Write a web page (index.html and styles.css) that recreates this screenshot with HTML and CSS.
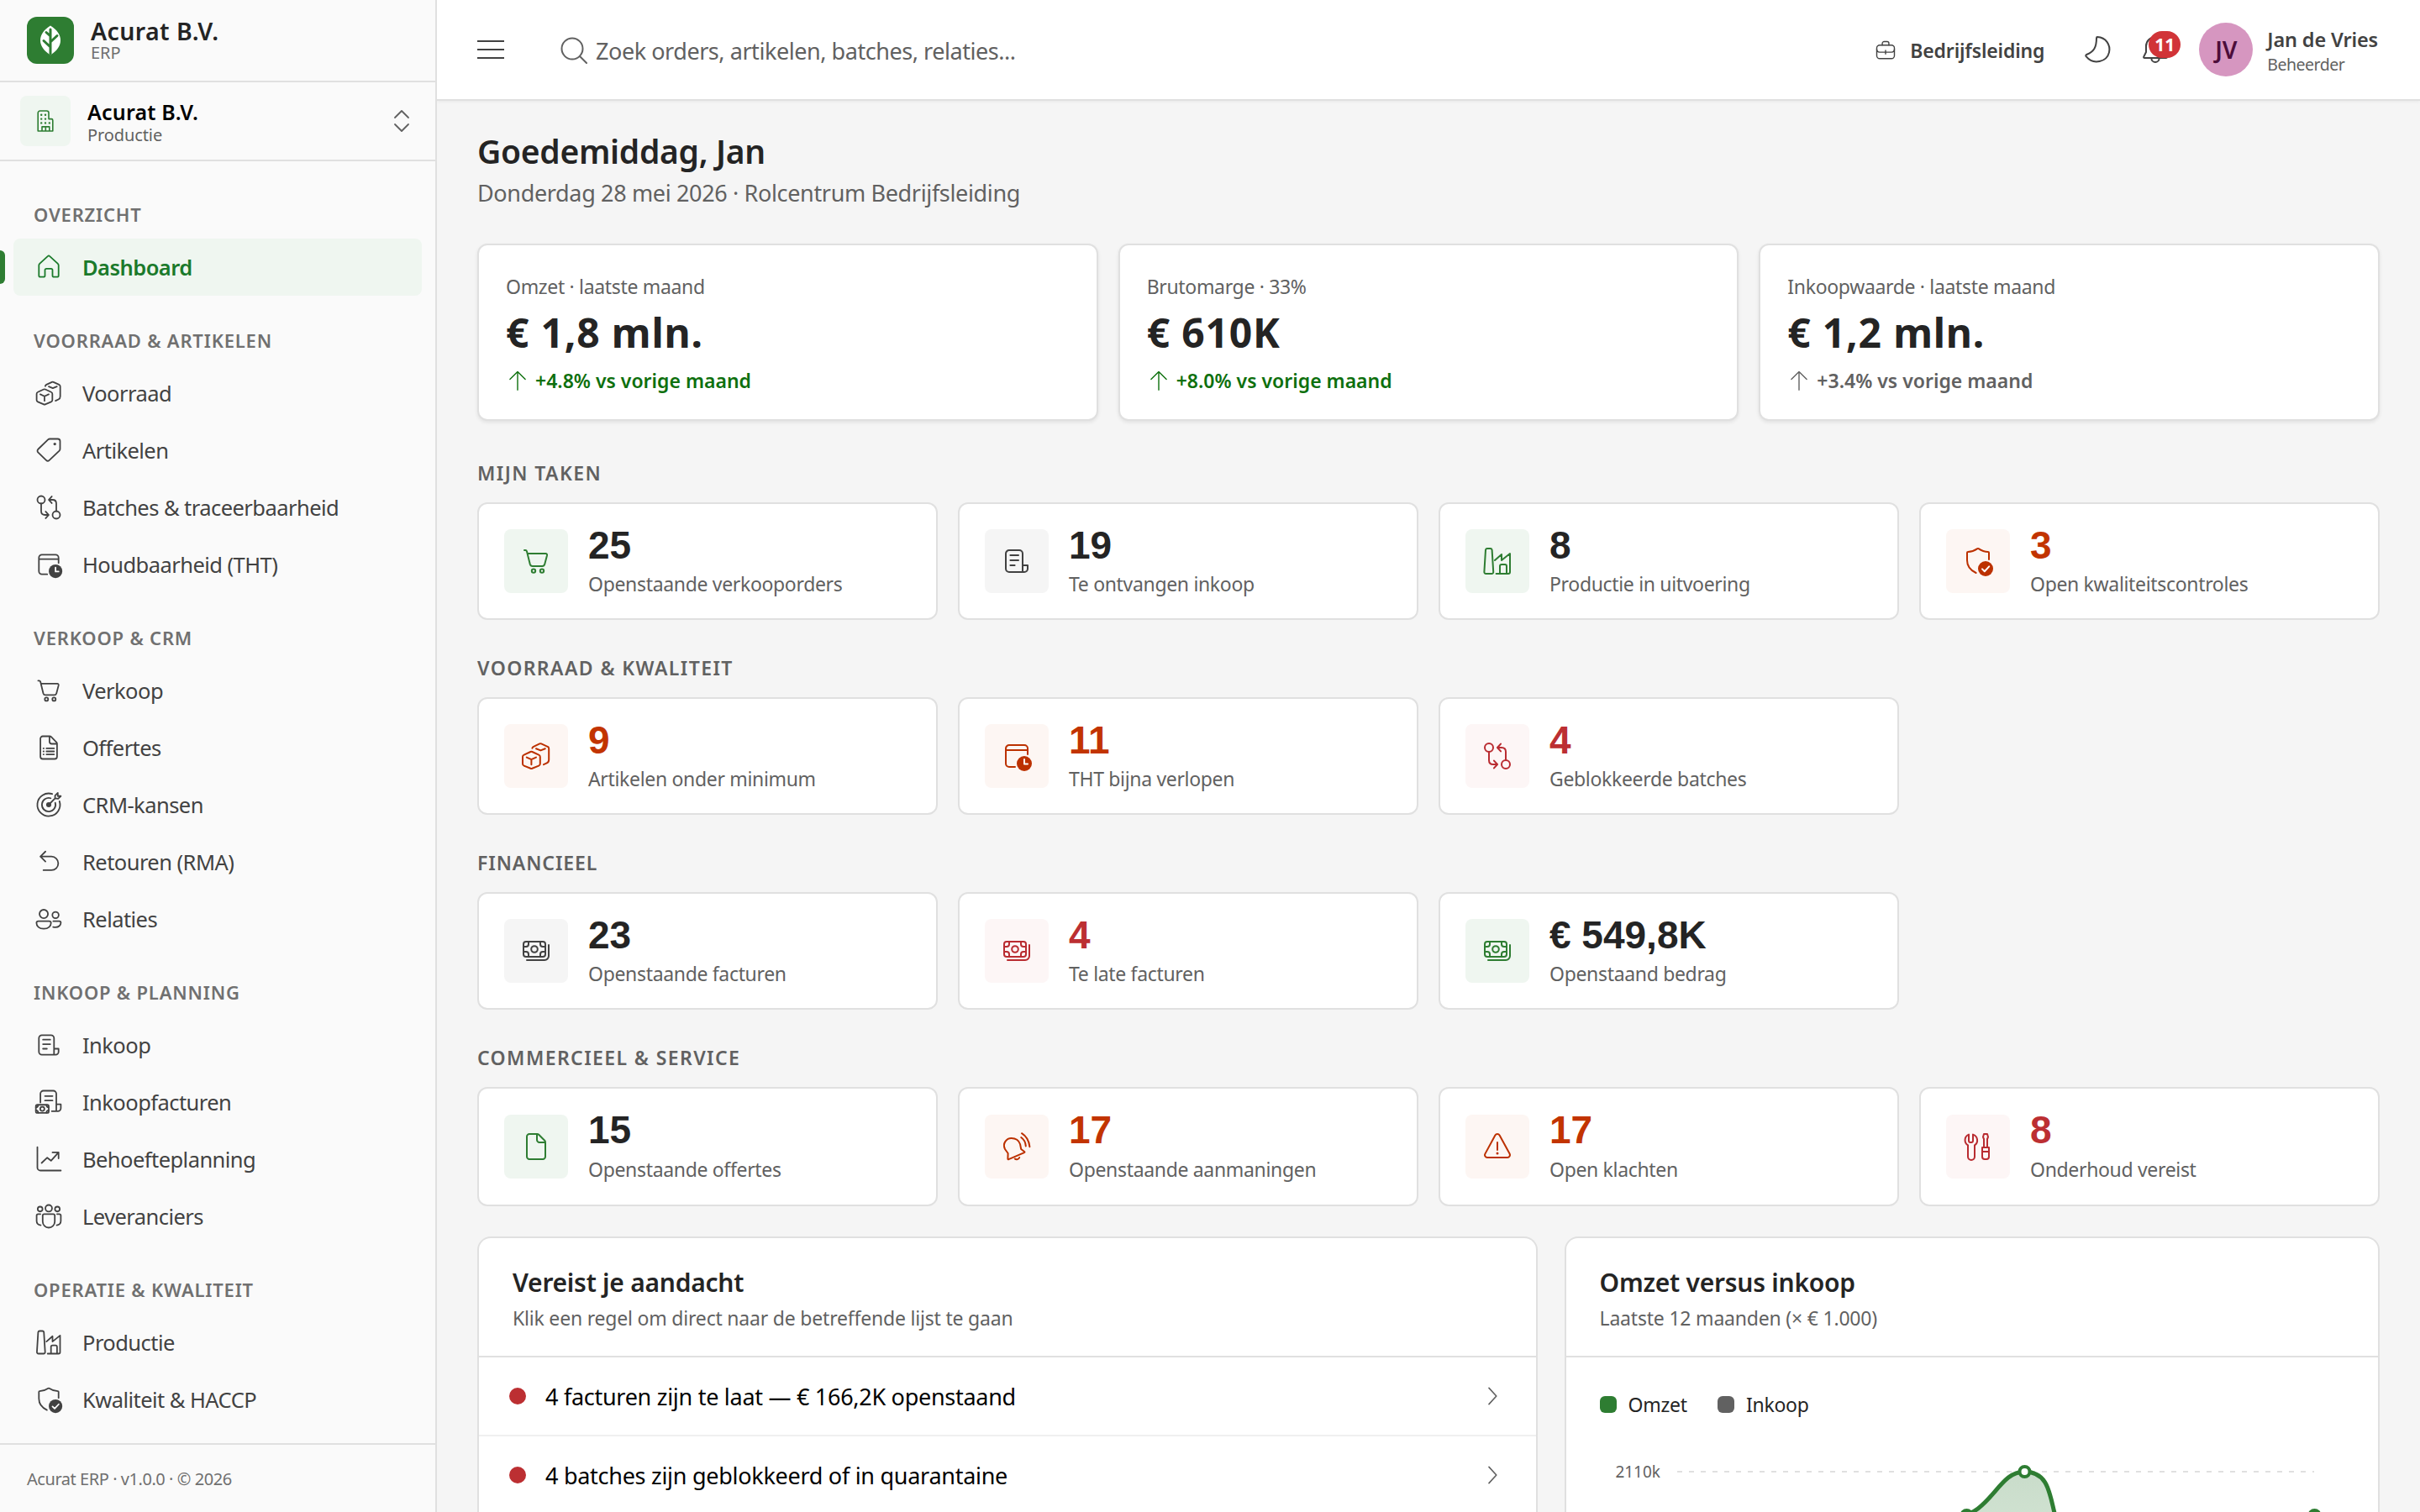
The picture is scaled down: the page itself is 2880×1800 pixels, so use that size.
FILE: index.html
```
<!DOCTYPE html>
<html lang="nl">
<head>
    <meta charset="UTF-8">
    <title>Acurat ERP</title>
    <link rel="stylesheet" href="styles.css">
</head>
<body>
    <svg class="sprite">
        <symbol id="home" viewBox="0 0 20 20"><path d="M9.3 2.8a1 1 0 0 1 1.4 0l5.3 4.9c.3.3.5.7.5 1.1v6.7c0 .6-.4 1-1 1h-2c-.6 0-1-.4-1-1V12c0-.6-.4-1-1-1h-3c-.6 0-1 .4-1 1v3.5c0 .6-.4 1-1 1h-2c-.6 0-1-.4-1-1V8.8c0-.4.2-.8.5-1.1z"/></symbol>
        <symbol id="boxes" viewBox="0 0 20 20"><path d="M6.7 7.5a1.2 1.2 0 0 1 1 0l3.9 1.8c.5.2.8.7.8 1.2v4.1c0 .5-.3 1-.8 1.2l-3.9 1.6a1.2 1.2 0 0 1-1 0l-3.9-1.6c-.5-.2-.8-.7-.8-1.2v-4.1c0-.5.3-1 .8-1.2zM4.400 10.8l2.8 1.3 2.8-1.3M7.2 12.1v3M7.7 5.4c.1-.5.4-.8.8-1l3.6-1.7a1.2 1.2 0 0 1 1 0l3.7 1.7c.5.2.8.7.8 1.2v6.6c0 .9-.4 1.6-1.2 2l-1.9.9M10 5.6l2.7 1.1 2.7-1.1"/></symbol>
        <symbol id="tag" viewBox="0 0 20 20"><path d="M10.7 2.5H16c.8 0 1.5.7 1.5 1.5v5.2c0 .4-.2.8-.5 1.1l-6.6 6.3a1.5 1.5 0 0 1-2.1 0L3 11.5a1.5 1.5 0 0 1 0-2.2L9.5 3c.3-.3.7-.5 1.2-.5z"/><circle class="solid" cx="14" cy="5.9" r=".9"/></symbol>
        <symbol id="branch" viewBox="0 0 20 20"><circle cx="5" cy="5" r="2.5"/><circle cx="15" cy="15" r="2.5"/><path d="M5 7.5v5C5 14 6 15 7.5 15h2.3M8 12.8l2 2.2-2 2.2M15 12.5v-5C15 6 14 5 12.5 5h-2.3M12 2.8L10 5l2 2.2"/></symbol>
        <symbol id="calclock" viewBox="0 0 20 20"><path d="M9 16.5H5.5a2 2 0 0 1-2-2v-9a2 2 0 0 1 2-2h9a2 2 0 0 1 2 2V9M3.5 6.5h13"/><circle class="solid" cx="14.5" cy="14.5" r="4.5"/><path class="knock" d="M14.5 12v2.7h2"/></symbol>
        <symbol id="cart" viewBox="0 0 20 20"><path d="M3 3.5h.6c.5 0 .8.3.9.7L6.4 11.9c.2.7.7 1.1 1.4 1.1h5.9c.7 0 1.2-.4 1.4-1.1l1.4-5.3c.1-.6-.2-1.1-.8-1.1H5"/><circle cx="8.5" cy="15.8" r="1.1"/><circle cx="13.5" cy="15.8" r="1.1"/></symbol>
        <symbol id="doclist" viewBox="0 0 20 20"><path d="M6 2.5h4.6c.4 0 .8.2 1 .4l3.5 3.5c.3.3.4.6.4 1V16c0 .8-.7 1.5-1.5 1.5H6c-.8 0-1.5-.7-1.5-1.5V4c0-.8.7-1.5 1.5-1.5zM10.5 2.7V6c0 .8.7 1.5 1.5 1.5h3.3M8.5 10.5h5M8.5 12.5h5M8.5 14.5h5M6.5 10.5h.2M6.5 12.5h.2M6.5 14.5h.2"/></symbol>
        <symbol id="doc" viewBox="0 0 20 20"><path d="M6 2.5h4.6c.4 0 .8.2 1 .4l3.5 3.5c.3.3.4.6.4 1V16c0 .8-.7 1.5-1.5 1.5H6c-.8 0-1.5-.7-1.5-1.5V4c0-.8.7-1.5 1.5-1.5zM10.5 2.7V6c0 .8.7 1.5 1.5 1.5h3.3"/></symbol>
        <symbol id="target" viewBox="0 0 20 20"><path d="M12.3 2.9A7.5 7.5 0 1 0 17.1 7.7M11.3 5.7A4.5 4.5 0 1 0 14.3 8.7M10 10l4.2-4.2M14.2 5.8V4l1.8-1.8v2.1h2L16.2 6z"/><circle class="solid" cx="10" cy="10" r="1.7"/></symbol>
        <symbol id="reply" viewBox="0 0 20 20"><path d="M7.8 3.2L4.5 6.5l3.3 3.3M4.5 6.5h7.3a4.5 4.5 0 0 1 0 9H6.5"/></symbol>
        <symbol id="people" viewBox="0 0 20 20"><circle cx="6.7" cy="6.7" r="2.8"/><circle cx="14.5" cy="7.4" r="2.1"/><path d="M3.2 11.5h7c.7 0 1.3.5 1.3 1.2 0 2-1.7 3.8-4.8 3.8s-4.8-1.8-4.8-3.8c0-.7.6-1.2 1.3-1.2zM13 11.5h4c.6 0 1 .5 1 1 0 1.6-1.4 3-3.5 3-.6 0-1.1-.1-1.6-.2"/></symbol>
        <symbol id="receipt" viewBox="0 0 20 20"><path d="M13.5 12.5v-7a2 2 0 0 0-2-2h-6a2 2 0 0 0-2 2v9a2 2 0 0 0 2 2h9a2 2 0 0 0 2-2v-2h-3v4M6.2 6.5h4.8M6.2 9.5h4.8M6.2 12.5h2.6"/></symbol>
        <symbol id="receiptmoney" viewBox="0 0 20 20"><path d="M4.5 10.3V4.5a2 2 0 0 1 2-2H13a2 2 0 0 1 2 2v7h3V14a2 2 0 0 1-2 2h-4M15 11.5V16M7.5 6h5M7.5 9h5"/><rect x="1.5" y="11.8" width="8.5" height="5.4" rx="1"/><circle cx="5.75" cy="14.5" r="1.4"/><path d="M1.5 13.5c1 0 1.5-.5 1.5-1.5M1.5 15.5c1 0 1.5.5 1.5 1.5M10 13.5c-1 0-1.5-.5-1.5-1.5M10 15.5c-1 0-1.5.5-1.5 1.5"/></symbol>
        <symbol id="trend" viewBox="0 0 20 20"><path d="M2.5 2v13.5a2 2 0 0 0 2 2H18M5.3 12.5L9 9l2.5 2 5-5.5M12.5 5.5h4v4"/></symbol>
        <symbol id="team" viewBox="0 0 20 20"><circle cx="10" cy="4.7" r="2.2"/><circle cx="4.3" cy="5.2" r="1.6"/><circle cx="15.7" cy="5.2" r="1.6"/><path d="M7 8.5h6c.6 0 1 .4 1 1v4a4 4 0 0 1-8 0v-4c0-.6.4-1 1-1zM4.5 8.5H3c-.6 0-1 .4-1 1V13c0 1.5 1 2.6 2.7 2.9M15.5 8.5H17c.6 0 1 .4 1 1V13c0 1.5-1 2.6-2.7 2.9"/></symbol>
        <symbol id="factory" viewBox="0 0 20 20"><path d="M4 2.5h1.8c.5 0 .9.3 1 .8l.8 13c.1.7-.4 1.2-1 1.2H3.2c-.6 0-1.1-.5-1-1.2l.8-13c.1-.5.5-.8 1-.8zM8.5 9.5l4-3.5v3.5l5-4v11c0 .6-.4 1-1 1H9.3M11.5 17.3V13c0-.6.4-1 1-1h2c.6 0 1 .4 1 1v4.3"/></symbol>
        <symbol id="shield" viewBox="0 0 20 20"><path d="M8.8 17C5.5 15.5 3.5 13 3.5 9.5V5c0-.3.2-.5.5-.5 2 0 3.8-.6 5.7-1.9.2-.1.4-.1.6 0 1.9 1.3 3.7 1.9 5.7 1.9.3 0 .5.2.5.5v4"/><circle class="solid" cx="14.5" cy="14.5" r="4.5"/><path class="knock" d="M12.5 14.7l1.4 1.4 2.7-2.9"/></symbol>
        <symbol id="money" viewBox="0 0 20 20"><rect x="2.5" y="4.5" width="13" height="9" rx="1.5"/><circle cx="9" cy="9" r="1.9"/><path d="M2.5 7.5H4A1.5 1.5 0 0 0 5.5 6V4.5M15.5 7.5H14A1.5 1.5 0 0 1 12.5 6V4.5M2.5 10.5H4A1.5 1.5 0 0 1 5.5 12v1.5M15.5 10.5H14a1.5 1.5 0 0 0-1.5 1.5v1.5M4.5 15.5H15a2.5 2.5 0 0 0 2.5-2.5V6.5"/></symbol>
        <symbol id="bellring" viewBox="0 0 20 20"><path d="M4.7 17.3l.1-3.3L3 11.5C1.3 8 4 5 6.8 5c2.5 0 4.5 1.5 5.2 3.5l.6 3 2.1 1.6c.1.2 0 .4-.2.5l-9.3 4c-.3.1-.5 0-.5-.3zM8.9 17.3c.8.7 2.3.3 2.7-.8M12.6 4.5c1.7 1.2 2.7 3 2.8 5.2M13 2.1c2.7 1.7 4.3 4.5 4.7 8"/></symbol>
        <symbol id="warning" viewBox="0 0 20 20"><path d="M8.7 3.2a1.5 1.5 0 0 1 2.6 0l6 11.1a1.5 1.5 0 0 1-1.3 2.2H4a1.5 1.5 0 0 1-1.3-2.2zM10 7.5V12"/><circle class="solid" cx="10" cy="14" r=".75"/></symbol>
        <symbol id="tools" viewBox="0 0 20 20"><path d="M4.5 2.8v3.7c0 .6.4 1 1 1H6c.6 0 1-.4 1-1V2.8a3.6 3.6 0 0 1 1 6.4V16a1.5 1.5 0 0 1-4 0V9.2a3.6 3.6 0 0 1 .5-6.4zM13.5 10.5v-5L13 4.3l.5-1.8h2l.5 1.8-.5 1.2v5M12.5 10.5h4V16a1.5 1.5 0 0 1-1.5 1.5h-1a1.5 1.5 0 0 1-1.5-1.5zM12.5 13h4"/></symbol>
        <symbol id="building" viewBox="0 0 20 20"><path d="M4.5 17.5V4c0-.8.7-1.5 1.5-1.5h5c.8 0 1.5.7 1.5 1.5v4.5h2c.6 0 1 .4 1 1v8zM7.5 17.3v-3H13v3M10.2 14.5v3"/><path class="dots" d="M7 5.5h.01M10 5.5h.01M7 8.5h.01M10 8.5h.01M7 11.5h.01M10 11.5h.01M13 11.5h.01"/></symbol>
        <symbol id="up" viewBox="0 0 20 20"><path d="M10 18V2.5M3.5 9L10 2.5 16.5 9"/></symbol>
        <symbol id="chevron" viewBox="0 0 20 20"><path d="M7.5 4l5.5 6-5.5 6"/></symbol>
        <symbol id="briefcase" viewBox="0 0 20 20"><rect x="2.5" y="5.5" width="15" height="11.5" rx="2.5"/><path d="M7.2 5.5V4c0-.8.7-1.5 1.5-1.5h2.6c.8 0 1.5.7 1.5 1.5v1.5M2.5 9c0 1.5 1 2.5 2.5 2.5h10c1.5 0 2.5-1 2.5-2.5M10 10v3"/></symbol>
        <symbol id="moon" viewBox="0 0 20 20"><path d="M10.5 2.5c5.2.3 8 4.8 7 9.2-1.3 5.5-9.2 7.9-13.7 2.4-.3-.4-.2-.9.3-1.1C8.3 11.3 10 9 10 3.1c0-.4.2-.6.5-.6z"/></symbol>
        <symbol id="bell" viewBox="0 0 20 20"><path d="M10 2.5A5.5 5.5 0 0 1 15.5 8v3.5l1.4 2.8c.2.4-.1.7-.5.7H3.6c-.4 0-.7-.3-.5-.7l1.4-2.8V8A5.5 5.5 0 0 1 10 2.5zM7.7 15.2a2.3 2.3 0 0 0 4.6 0"/></symbol>
    </svg>

    <aside class="sidebar">
        <div class="brand">
            <svg class="logo" viewBox="0 0 56 56">
                <path class="leaf" d="M28 10.5c8 5 12 11 12 17.5s-4 12.5-12 17.5c-8-5-12-11-12-17.5s4-12.5 12-17.5z"/>
                <path class="stem" d="M28 44V15M28 23l-5-4.5M28 30l8-7.5M28 36l-8-7.5"/>
            </svg>
            <div class="brand-text">
                <strong>Acurat B.V.</strong>
                <span>ERP</span>
            </div>
        </div>
        <div class="tenant">
            <div class="tenant-icon"><svg><use href="#building"/></svg></div>
            <div class="tenant-text">
                <strong>Acurat B.V.</strong>
                <span>Productie</span>
            </div>
            <svg class="updown" viewBox="0 0 20 28"><path d="M2 10l8-8 8 8M2 18l8 8 8-8"/></svg>
        </div>
        <nav>
            <h3>OVERZICHT</h3>
            <a class="active"><svg><use href="#home"/></svg>Dashboard</a>
            <h3>VOORRAAD &amp; ARTIKELEN</h3>
            <a><svg><use href="#boxes"/></svg>Voorraad</a>
            <a><svg><use href="#tag"/></svg>Artikelen</a>
            <a><svg><use href="#branch"/></svg>Batches &amp; traceerbaarheid</a>
            <a><svg><use href="#calclock"/></svg>Houdbaarheid (THT)</a>
            <h3>VERKOOP &amp; CRM</h3>
            <a><svg><use href="#cart"/></svg>Verkoop</a>
            <a><svg><use href="#doclist"/></svg>Offertes</a>
            <a><svg><use href="#target"/></svg>CRM-kansen</a>
            <a><svg><use href="#reply"/></svg>Retouren (RMA)</a>
            <a><svg><use href="#people"/></svg>Relaties</a>
            <h3>INKOOP &amp; PLANNING</h3>
            <a><svg><use href="#receipt"/></svg>Inkoop</a>
            <a><svg><use href="#receiptmoney"/></svg>Inkoopfacturen</a>
            <a><svg><use href="#trend"/></svg>Behoefteplanning</a>
            <a><svg><use href="#team"/></svg>Leveranciers</a>
            <h3>OPERATIE &amp; KWALITEIT</h3>
            <a><svg><use href="#factory"/></svg>Productie</a>
            <a><svg><use href="#shield"/></svg>Kwaliteit &amp; HACCP</a>
        </nav>
        <footer>Acurat ERP · v1.0.0 · © 2026</footer>
    </aside>

    <div class="page">
        <header class="topbar">
            <svg class="burger" viewBox="0 0 32 24"><path d="M0 2h32M0 12h32M0 22h32"/></svg>
            <div class="search">
                <svg viewBox="0 0 32 32"><circle cx="14" cy="14" r="12.5"/><path d="M23 23l8 8"/></svg>
                <span>Zoek orders, artikelen, batches, relaties...</span>
            </div>
            <div class="role"><svg><use href="#briefcase"/></svg><span>Bedrijfsleiding</span></div>
            <svg class="moon"><use href="#moon"/></svg>
            <div class="alerts"><svg><use href="#bell"/></svg><span class="badge">11</span></div>
            <div class="avatar">JV</div>
            <div class="user">
                <strong>Jan de Vries</strong>
                <span>Beheerder</span>
            </div>
        </header>

        <main>
            <h1>Goedemiddag, Jan</h1>
            <p class="subtitle">Donderdag 28 mei 2026 · Rolcentrum Bedrijfsleiding</p>

            <div class="kpis">
                <div class="kpi">
                    <p class="kpi-label">Omzet · laatste maand</p>
                    <p class="kpi-value">€ 1,8 mln.</p>
                    <p class="kpi-delta good"><svg><use href="#up"/></svg>+4.8% vs vorige maand</p>
                </div>
                <div class="kpi">
                    <p class="kpi-label">Brutomarge · 33%</p>
                    <p class="kpi-value">€ 610K</p>
                    <p class="kpi-delta good"><svg><use href="#up"/></svg>+8.0% vs vorige maand</p>
                </div>
                <div class="kpi">
                    <p class="kpi-label">Inkoopwaarde · laatste maand</p>
                    <p class="kpi-value">€ 1,2 mln.</p>
                    <p class="kpi-delta"><svg><use href="#up"/></svg>+3.4% vs vorige maand</p>
                </div>
            </div>

            <h2 class="first">MIJN TAKEN</h2>
            <div class="stats">
                <div class="stat green"><div class="icon"><svg><use href="#cart"/></svg></div><div><b>25</b><span>Openstaande verkooporders</span></div></div>
                <div class="stat"><div class="icon"><svg><use href="#receipt"/></svg></div><div><b>19</b><span>Te ontvangen inkoop</span></div></div>
                <div class="stat green"><div class="icon"><svg><use href="#factory"/></svg></div><div><b>8</b><span>Productie in uitvoering</span></div></div>
                <div class="stat orange"><div class="icon"><svg><use href="#shield"/></svg></div><div><b>3</b><span>Open kwaliteitscontroles</span></div></div>
            </div>

            <h2>VOORRAAD &amp; KWALITEIT</h2>
            <div class="stats">
                <div class="stat orange"><div class="icon"><svg><use href="#boxes"/></svg></div><div><b>9</b><span>Artikelen onder minimum</span></div></div>
                <div class="stat orange"><div class="icon"><svg><use href="#calclock"/></svg></div><div><b>11</b><span>THT bijna verlopen</span></div></div>
                <div class="stat red"><div class="icon"><svg><use href="#branch"/></svg></div><div><b>4</b><span>Geblokkeerde batches</span></div></div>
            </div>

            <h2 class="narrow">FINANCIEEL</h2>
            <div class="stats">
                <div class="stat"><div class="icon"><svg><use href="#money"/></svg></div><div><b>23</b><span>Openstaande facturen</span></div></div>
                <div class="stat red"><div class="icon"><svg><use href="#money"/></svg></div><div><b>4</b><span>Te late facturen</span></div></div>
                <div class="stat green"><div class="icon"><svg><use href="#money"/></svg></div><div><b>€ 549,8K</b><span>Openstaand bedrag</span></div></div>
            </div>

            <h2>COMMERCIEEL &amp; SERVICE</h2>
            <div class="stats tall">
                <div class="stat green"><div class="icon"><svg><use href="#doc"/></svg></div><div><b>15</b><span>Openstaande offertes</span></div></div>
                <div class="stat orange"><div class="icon"><svg><use href="#bellring"/></svg></div><div><b>17</b><span>Openstaande aanmaningen</span></div></div>
                <div class="stat orange"><div class="icon"><svg><use href="#warning"/></svg></div><div><b>17</b><span>Open klachten</span></div></div>
                <div class="stat red"><div class="icon"><svg><use href="#tools"/></svg></div><div><b>8</b><span>Onderhoud vereist</span></div></div>
            </div>

            <div class="panels">
                <section class="panel">
                    <div class="panel-head">
                        <h4>Vereist je aandacht</h4>
                        <p>Klik een regel om direct naar de betreffende lijst te gaan</p>
                    </div>
                    <div class="row"><i></i><span>4 facturen zijn te laat — € 166,2K openstaand</span><svg><use href="#chevron"/></svg></div>
                    <div class="row"><i></i><span>4 batches zijn geblokkeerd of in quarantaine</span><svg><use href="#chevron"/></svg></div>
                </section>
                <section class="panel">
                    <div class="panel-head">
                        <h4>Omzet versus inkoop</h4>
                        <p>Laatste 12 maanden (× € 1.000)</p>
                    </div>
                    <div class="legend">
                        <span><i></i>Omzet</span>
                        <span><i class="grey"></i>Inkoop</span>
                    </div>
                    <svg class="chart" viewBox="0 0 928 108">
                        <defs>
                            <linearGradient id="area" x1="0" y1="0" x2="0" y2="1">
                                <stop offset="0" stop-color="#c9dcca"/>
                                <stop offset="1" stop-color="#d0e2d1"/>
                            </linearGradient>
                        </defs>
                        <text x="92" y="67">2110k</text>
                        <line x1="112" y1="60" x2="870" y2="60"/>
                        <path fill="url(#area)" d="M456 112C480 100 497 60 525 60S555 92 564 120H456z"/>
                        <path class="line" d="M440 115C486 112 493 60 525 60S555 92 564 120"/>
                        <circle cx="456.5" cy="112" r="6"/>
                        <circle cx="525.5" cy="60" r="6"/>
                        <circle cx="870.5" cy="112" r="6"/>
                    </svg>
                </section>
            </div>
        </main>
    </div>
</body>
</html>
```
FILE: styles.css
```
* {
    box-sizing: border-box;
    margin: 0;
    padding: 0;
}
body {
    display: flex;
    height: 100vh;
    overflow: hidden;
    font-family: "Noto Sans", sans-serif;
    background-color: #f5f5f5;
    color: #242424;
}
.sprite {
    display: none;
}
svg {
    flex-shrink: 0;
    fill: none;
    stroke: currentColor;
    stroke-linecap: round;
    stroke-linejoin: round;
}
.solid {
    fill: currentColor;
    stroke: none;
}
.knock {
    stroke: #fff;
}
.dots {
    stroke-width: 1.5;
}
strong, h1, h2, h3, h4 {
    font-weight: 600;
}

/* sidebar */
.sidebar {
    display: flex;
    flex-direction: column;
    width: 520px;
    flex-shrink: 0;
    background-color: #fafafa;
    border-right: 2px solid #e0e0e0;
}
.brand {
    display: flex;
    gap: 20px;
    height: 98px;
    padding: 20px 32px;
    border-bottom: 2px solid #e0e0e0;
}
.logo {
    width: 56px;
    height: 56px;
    border-radius: 12px;
    background-color: #2e7d32;
}
.leaf {
    fill: #fff;
    stroke: none;
}
.stem {
    stroke: #2e7d32;
    stroke-width: 3;
}
.brand-text, .tenant-text, .user {
    display: flex;
    flex-direction: column;
}
.brand-text {
    padding-top: 2px;
}
.brand-text strong {
    font-size: 28.5px;
    line-height: 30px;
    letter-spacing: 0.4px;
}
.brand-text span {
    font-size: 20px;
    line-height: 22px;
    color: #707070;
}
.tenant {
    display: flex;
    align-items: center;
    height: 94px;
    padding: 0 30px 0 24px;
    border-bottom: 2px solid #e0e0e0;
}
.tenant-icon {
    display: flex;
    align-items: center;
    justify-content: center;
    width: 60px;
    height: 60px;
    margin-right: 20px;
    border-radius: 8px;
    background-color: #eff6f0;
    color: #2e7d32;
}
.tenant-icon svg {
    width: 32px;
    height: 32px;
}
.tenant-text {
    flex: 1;
    padding-top: 2px;
}
.tenant-text strong {
    font-size: 25px;
    line-height: 30px;
    letter-spacing: 0.2px;
    color: #000;
}
.tenant-text span {
    font-size: 20px;
    line-height: 25px;
    letter-spacing: -0.1px;
    color: #616161;
}
.updown {
    width: 20px;
    height: 28px;
    stroke-width: 1.8;
    color: #616161;
}
nav {
    flex: 1;
    padding: 10px 16px 0;
}
nav h3 {
    height: 82px;
    padding: 38px 24px 0;
    font-size: 22px;
    line-height: 30px;
    letter-spacing: 0.8px;
    color: #707070;
}
nav a {
    position: relative;
    display: flex;
    align-items: center;
    gap: 22px;
    height: 68px;
    padding: 0 24px;
    border-radius: 8px;
    font-size: 25.5px;
    letter-spacing: -0.55px;
    color: #424242;
}
nav svg {
    width: 36px;
    height: 36px;
}
nav .active {
    background-color: #eff6f0;
    color: #1b7a2b;
    font-weight: 600;
}
nav .active::before {
    content: "";
    position: absolute;
    left: -16px;
    top: 14px;
    width: 6px;
    height: 40px;
    border-radius: 0 6px 6px 0;
    background-color: #2e7d32;
}
.sidebar footer {
    height: 82px;
    padding: 1px 32px 0;
    border-top: 2px solid #e0e0e0;
    font-size: 20px;
    line-height: 80px;
    letter-spacing: -0.45px;
    color: #707070;
}

/* top bar */
.page {
    flex: 1;
    min-width: 0;
    overflow: hidden;
}
.topbar {
    display: flex;
    align-items: center;
    height: 120px;
    padding: 0 50px 0 48px;
    background-color: #fff;
    border-bottom: 2px solid #e0e0e0;
    box-shadow: 0 1px 4px rgba(0, 0, 0, 0.06);
}
.burger {
    width: 32px;
    height: 24px;
    stroke-width: 2.2;
    color: #424242;
}
.search {
    display: flex;
    align-items: center;
    flex: 1;
    gap: 10px;
    margin-left: 67px;
    padding-top: 2px;
    font-size: 27px;
    letter-spacing: -0.45px;
    color: #616161;
}
.search svg {
    width: 32px;
    height: 32px;
    stroke-width: 2;
}
.role {
    display: flex;
    align-items: center;
    gap: 15px;
    padding-top: 2px;
    font-size: 23px;
    font-weight: 600;
    letter-spacing: -0.15px;
    color: #424242;
}
.role svg {
    width: 28px;
    height: 28px;
}
.moon {
    width: 40px;
    height: 40px;
    margin: 0 30px 0 42px;
    color: #424242;
}
.alerts {
    position: relative;
    width: 40px;
    height: 40px;
    margin-right: 32px;
    color: #424242;
}
.alerts svg {
    width: 40px;
    height: 40px;
}
.badge {
    position: absolute;
    left: 12px;
    top: -2px;
    width: 38px;
    height: 32px;
    border-radius: 16px;
    background-color: #d13438;
    color: #fff;
    font-size: 21px;
    font-weight: 700;
    line-height: 32px;
    text-align: center;
}
.avatar {
    width: 64px;
    height: 64px;
    margin-right: 17px;
    border-radius: 50%;
    background-color: #d696c0;
    color: #4c0d3a;
    font-size: 28px;
    font-weight: 600;
    line-height: 65px;
    text-align: center;
}
.user {
    padding-top: 4px;
}
.user strong {
    font-size: 23.5px;
    line-height: 30px;
    letter-spacing: -0.15px;
    color: #424242;
}
.user span {
    font-size: 19.5px;
    line-height: 29px;
    letter-spacing: -0.5px;
    color: #616161;
}

/* dashboard */
main {
    padding: 31px 48px 0;
}
h1 {
    font-size: 39px;
    line-height: 57px;
    letter-spacing: -0.3px;
}
.subtitle {
    font-size: 27px;
    line-height: 44px;
    letter-spacing: -0.35px;
    color: #616161;
}
.kpis {
    display: grid;
    grid-template-columns: repeat(3, 1fr);
    gap: 24px;
    margin-top: 38px;
}
.kpi {
    height: 211px;
    padding: 29px 32px 0;
    background-color: #fff;
    border: 2px solid #e0e0e0;
    border-radius: 12px;
    box-shadow: 0 2px 4px rgba(0, 0, 0, 0.08);
}
.kpi-label {
    font-size: 23px;
    line-height: 40px;
    letter-spacing: -0.33px;
    color: #616161;
}
.kpi-value {
    margin: 3px 0 5px;
    font-size: 48px;
    font-weight: 700;
    line-height: 64px;
    letter-spacing: 0.8px;
}
.kpi-delta {
    display: flex;
    align-items: center;
    gap: 7px;
    font-size: 23px;
    font-weight: 600;
    line-height: 40px;
    color: #616161;
}
.kpi-delta.good {
    color: #0e700e;
}
.kpi-delta svg {
    width: 28px;
    height: 28px;
}
h2 {
    margin: 41px 0 19px;
    font-size: 23px;
    line-height: 32px;
    letter-spacing: 1.4px;
    color: #616161;
}
h2.first {
    margin-top: 46px;
}
h2.narrow {
    letter-spacing: 0.9px;
}
.stats {
    display: grid;
    grid-template-columns: repeat(4, 1fr);
    gap: 24px;
}
.stat {
    display: flex;
    align-items: center;
    gap: 24px;
    height: 140px;
    padding: 0 30px;
    background-color: #fff;
    border: 2px solid #e0e0e0;
    border-radius: 12px;
}
.tall .stat {
    height: 142px;
}
.icon {
    display: flex;
    align-items: center;
    justify-content: center;
    width: 76px;
    height: 76px;
    border-radius: 8px;
    background-color: #f5f5f5;
    color: #424242;
}
.icon svg {
    width: 40px;
    height: 40px;
}
.stat b {
    display: block;
    font-family: "Liberation Sans", sans-serif;
    font-size: 46px;
    line-height: 50px;
}
.stat span {
    display: block;
    margin-top: 3px;
    font-size: 23px;
    line-height: 36px;
    letter-spacing: -0.33px;
    color: #616161;
}
.tall span {
    margin-top: 4px;
}
.green .icon {
    background-color: #eff6f0;
    color: #2e7d32;
}
.orange .icon {
    background-color: #fdf6f3;
    color: #bc3100;
}
.orange b {
    color: #c23400;
}
.red .icon {
    background-color: #fdf6f6;
    color: #b92c31;
}
.red b {
    color: #bc2f32;
}

/* bottom panels */
.panels {
    display: grid;
    grid-template-columns: 1.3fr 1fr;
    gap: 32px;
    margin-top: 36px;
}
.panel {
    height: 328px;
    overflow: hidden;
    background-color: #fff;
    border: 2px solid #e0e0e0;
    border-bottom: none;
    border-radius: 16px 16px 0 0;
}
.panel-head {
    height: 142px;
    padding: 31px 40px 0;
    border-bottom: 2px solid #e0e0e0;
}
.panel-head h4 {
    font-size: 30px;
    line-height: 44px;
    letter-spacing: -0.25px;
}
.panel-head p {
    font-size: 23px;
    line-height: 40px;
    letter-spacing: -0.2px;
    color: #616161;
}
.row {
    display: flex;
    align-items: center;
    height: 94px;
    padding: 0 36px;
    border-bottom: 2px solid #f0f0f0;
    font-size: 27px;
    letter-spacing: -0.28px;
    color: #000;
}
.row i {
    width: 20px;
    height: 20px;
    margin-right: 23px;
    border-radius: 50%;
    background-color: #bc2f32;
}
.row span {
    flex: 1;
}
.row svg {
    width: 32px;
    height: 32px;
    color: #616161;
}
.legend {
    display: flex;
    gap: 36px;
    padding: 36px 40px 0;
    font-size: 23px;
    line-height: 40px;
}
.legend span {
    display: flex;
    align-items: center;
    gap: 14px;
    letter-spacing: -0.25px;
}
.legend i {
    width: 20px;
    height: 20px;
    border-radius: 6px;
    background-color: #2e7d32;
}
.legend .grey {
    background-color: #616161;
}
.chart {
    display: block;
    width: 928px;
    height: 108px;
    margin-left: 20px;
}
.chart text {
    fill: #616161;
    stroke: none;
    font-size: 19px;
    text-anchor: end;
}
.chart line {
    stroke: #e0e0e0;
    stroke-width: 2;
    stroke-dasharray: 6 8;
    stroke-linecap: butt;
}
.chart path {
    stroke: none;
}
.chart .line {
    stroke: #2e7d32;
    stroke-width: 5;
}
.chart circle {
    fill: #fff;
    stroke: #2e7d32;
    stroke-width: 4;
}
```
